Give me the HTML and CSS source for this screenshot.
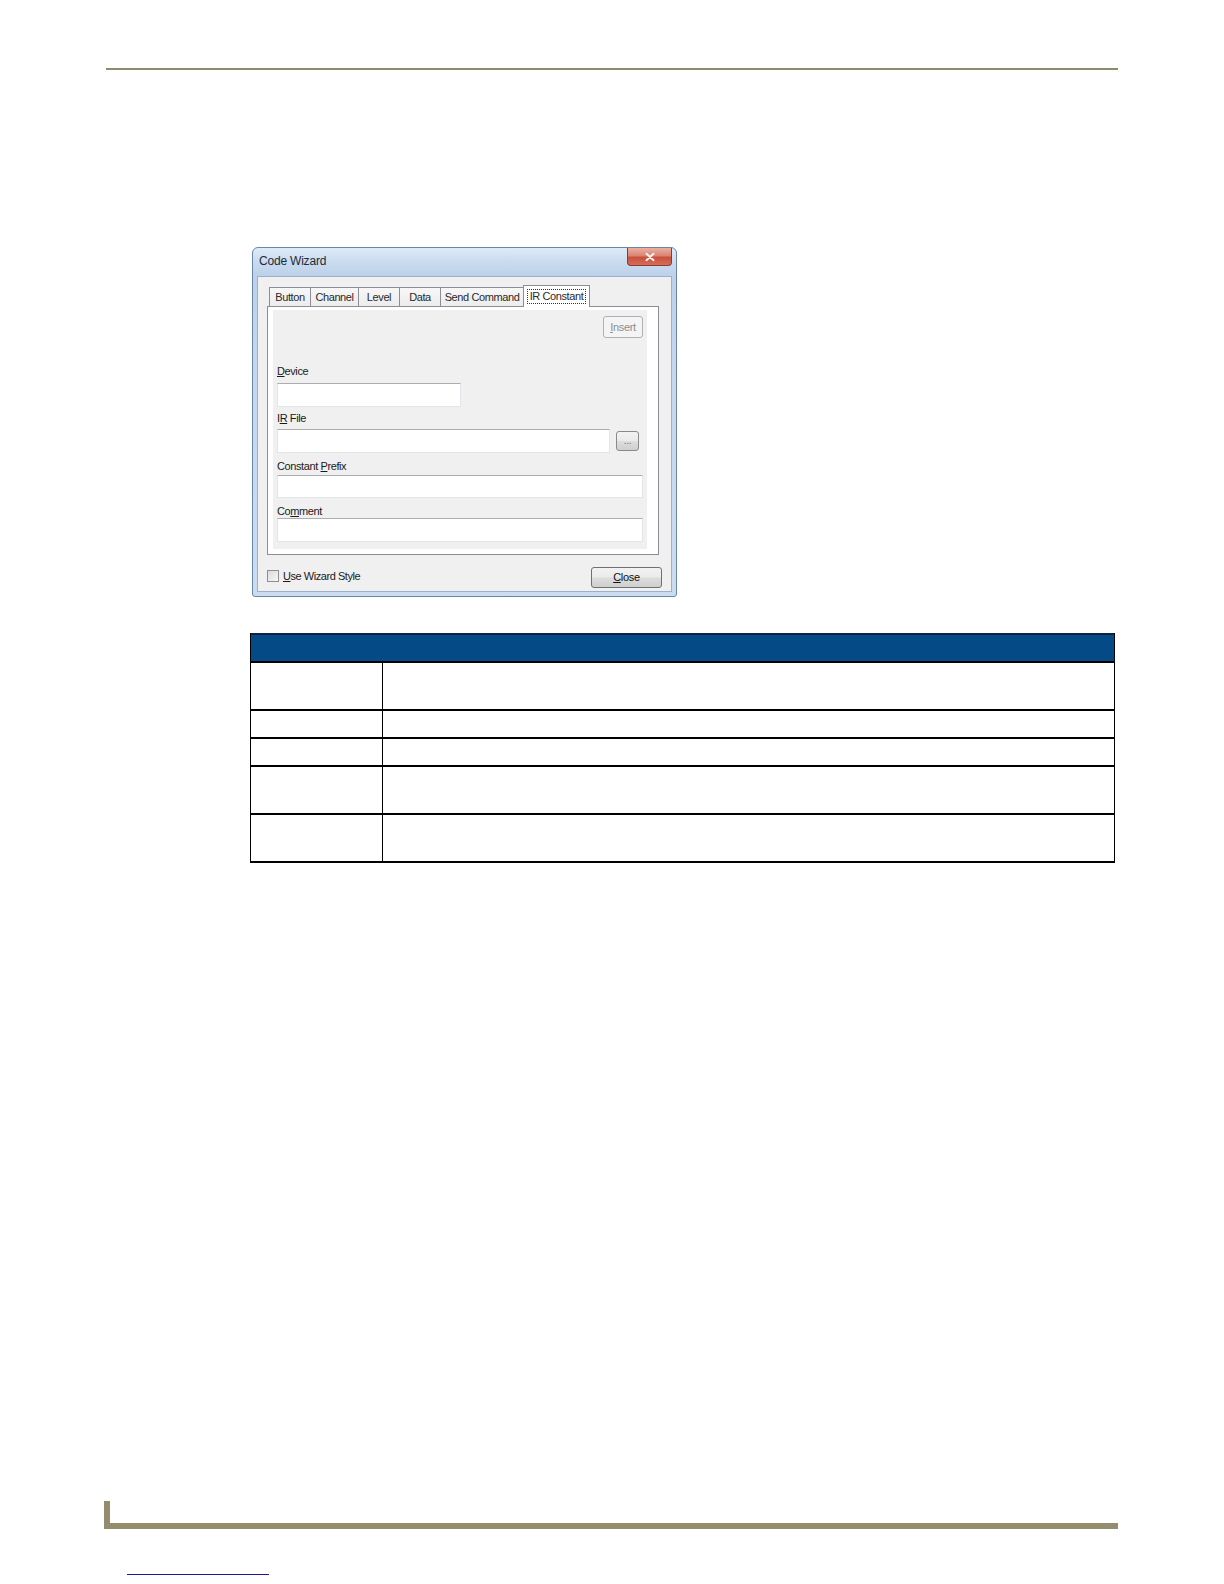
FILE: index.html
```html
<!DOCTYPE html>
<html lang="en">
<head>
<meta charset="utf-8">
<title>Code Wizard - IR Constant</title>
<link rel="stylesheet" href="styles.css">
</head>
<body>
<div class="page">
  <div class="top-rule"></div>

  <div class="dialog">
    <div class="titlebar">
      <span class="title">Code Wizard</span>
      <div class="close-x">
        <svg width="12" height="10" viewBox="0 0 12 10"><path d="M2.5 1.8 L9.5 8.2 M9.5 1.8 L2.5 8.2" stroke="#fbf4f2" stroke-width="2" stroke-linecap="round"/></svg>
      </div>
    </div>
    <div class="client">
      <div class="tabs">
        <div class="tab w-button">Button</div>
        <div class="tab w-channel">Channel</div>
        <div class="tab w-level">Level</div>
        <div class="tab w-data">Data</div>
        <div class="tab w-send">Send Command</div>
        <div class="tab tab-active w-ir"><span class="focus">IR Constant</span></div>
      </div>
      <div class="panel">
        <div class="page-area">
          <div class="insert-row">
            <div class="btn btn-disabled btn-insert"><u>I</u>nsert</div>
          </div>
          <div class="label lbl-device"><u>D</u>evice</div>
          <div class="field fld-device"></div>
          <div class="label lbl-ir">I<u>R</u> File</div>
          <div class="ir-row">
            <div class="field fld-ir"></div>
            <div class="btn btn-browse">...</div>
          </div>
          <div class="label lbl-prefix">Constant <u>P</u>refix</div>
          <div class="field fld-prefix"></div>
          <div class="label lbl-comment">Co<u>m</u>ment</div>
          <div class="field fld-comment"></div>
        </div>
      </div>
      <div class="dlg-footer">
        <div class="check-wrap">
          <div class="checkbox"></div>
          <span class="check-label"><u>U</u>se Wizard Style</span>
        </div>
        <div class="btn btn-close"><u>C</u>lose</div>
      </div>
    </div>
  </div>

  <div class="ptable">
    <div class="ptable-head"></div>
    <div class="prow h48"><div class="pcell-name"></div><div class="pcell-desc"></div></div>
    <div class="prow h28"><div class="pcell-name"></div><div class="pcell-desc"></div></div>
    <div class="prow h28"><div class="pcell-name"></div><div class="pcell-desc"></div></div>
    <div class="prow h48"><div class="pcell-name"></div><div class="pcell-desc"></div></div>
    <div class="prow h48 last"><div class="pcell-name"></div><div class="pcell-desc"></div></div>
  </div>

  <div class="foot-rule"></div>
  <div class="foot-link"></div>
</div>
</body>
</html>
```

FILE: styles.css
```css
* { box-sizing: border-box; }

html, body {
  margin: 0;
  padding: 0;
  background: #ffffff;
}

.page {
  width: 1224px;
  height: 1584px;
  overflow: hidden;
  font-family: "Liberation Sans", Arial, sans-serif;
}

.top-rule {
  margin: 68px 0 0 106px;
  width: 1012px;
  height: 2px;
  background: #8e8a6f;
}

/* ---------- dialog ---------- */
.dialog {
  margin: 177px 0 0 252px;
  width: 425px;
  height: 350px;
  border: 1px solid #6a86a6;
  border-radius: 6px 6px 3px 3px;
  background: linear-gradient(180deg, #dfeaf7 0px, #c9dbef 14px, #bcd1ea 28px, #c4d7ed 120px, #cbdcef 350px);
  padding: 0 4px 4px 4px;
  display: flex;
  flex-direction: column;
  font-size: 11px;
  color: #1a1a1a;
}

.titlebar {
  height: 28px;
  display: flex;
  align-items: flex-start;
  justify-content: space-between;
}

.title {
  margin: 6px 0 0 2px;
  font-size: 12px;
  color: #1d2a3a;
  letter-spacing: -0.2px;
}

.close-x {
  width: 45px;
  height: 18px;
  border: 1px solid #8a3a30;
  border-top: none;
  border-radius: 0 0 4px 4px;
  background: linear-gradient(180deg, #eab0a4 0%, #dc8472 45%, #c9503d 55%, #d46d58 100%);
  display: flex;
  align-items: center;
  justify-content: center;
}

.close-x svg { display: block; }

.client {
  flex: 1;
  border: 1px solid #9bb0ca;
  background: #f0f0f0;
  padding: 8px 12px 0 9px;
  display: flex;
  flex-direction: column;
}

/* tabs */
.tabs {
  display: flex;
  align-items: flex-end;
  height: 21px;
  padding-left: 2px;
  position: relative;
  z-index: 2;
}

.tab {
  height: 19px;
  border: 1px solid #8b8e96;
  border-bottom: none;
  border-right: none;
  background: linear-gradient(180deg, #f7f7f7 0%, #ececec 100%);
  font-size: 11px;
  line-height: 18px;
  text-align: center;
  color: #2a2a2a;
  letter-spacing: -0.4px;
  white-space: nowrap;
}

.w-button { width: 41px; }
.w-channel { width: 48px; }
.w-level { width: 41px; }
.w-data { width: 41px; }
.w-send { width: 83px; }

.tab-active {
  width: 67px;
  height: 22px;
  margin-bottom: -1px;
  border-right: 1px solid #8b8e96;
  background: #ffffff;
  line-height: 18px;
  padding-top: 1px;
}

.focus {
  display: inline-block;
  border: 1px dotted #333;
  line-height: 13px;
  padding: 0 2px;
}

.panel {
  width: 392px;
  height: 249px;
  border: 1px solid #8b8e96;
  background: #ffffff;
  padding: 3px 11px 5px 5px;
  position: relative;
  z-index: 1;
}

.page-area {
  height: 100%;
  background: #f0f0f0;
  padding: 0 4px 0 4px;
  display: flex;
  flex-direction: column;
}

.insert-row {
  display: flex;
  justify-content: flex-end;
  margin-top: 6px;
}

.btn {
  border: 1px solid #707070;
  border-radius: 3px;
  background: linear-gradient(180deg, #f2f2f2 0%, #ebebeb 48%, #dddddd 52%, #cfcfcf 100%);
  font-size: 11px;
  text-align: center;
  color: #111;
  letter-spacing: -0.3px;
}

.btn-disabled {
  border-color: #adb2b5;
  background: #f4f4f4;
  color: #8d8d8d;
}

.btn-insert {
  width: 40px;
  height: 22px;
  line-height: 20px;
}

.label {
  height: 14px;
  line-height: 14px;
  font-size: 11px;
  color: #1a1a1a;
  letter-spacing: -0.4px;
}

.lbl-device { margin-top: 26px; }
.lbl-ir { margin-top: 4px; }
.lbl-prefix { margin-top: 6px; }
.lbl-comment { margin-top: 6px; }

.field {
  background: #ffffff;
  border: 1px solid #e2e6ea;
  border-top-color: #abadb3;
}

.fld-device { width: 184px; height: 24px; margin-top: 5px; }

.ir-row {
  display: flex;
  align-items: center;
  margin-top: 4px;
}

.fld-ir { width: 333px; height: 24px; }

.btn-browse {
  width: 23px;
  height: 20px;
  margin-left: 6px;
  line-height: 17px;
  color: #777;
  font-size: 10px;
  border-color: #8a8a8a;
}

.fld-prefix { width: 366px; height: 23px; margin-top: 2px; }
.fld-comment { width: 366px; height: 24px; margin-top: 0; }

.dlg-footer {
  margin-top: 12px;
  margin-right: -3px;
  display: flex;
  align-items: center;
  justify-content: space-between;
}

.check-wrap {
  display: flex;
  align-items: center;
  margin-left: 0;
  margin-top: -3px;
}

.checkbox {
  width: 12px;
  height: 12px;
  border: 1px solid #8e8f8f;
  background: linear-gradient(135deg, #dcdcdc 0%, #f6f6f6 100%);
}

.check-label {
  margin-left: 4px;
  font-size: 11px;
  letter-spacing: -0.45px;
  color: #1a1a1a;
}

.btn-close {
  width: 71px;
  height: 21px;
  line-height: 19px;
}

/* ---------- parameter table ---------- */
.ptable {
  margin: 36px 0 0 250px;
  width: 865px;
  border-left: 1px solid #000;
  border-right: 1px solid #000;
}

.ptable-head {
  height: 30px;
  background: #034a87;
  border-top: 2px solid #0c2440;
  border-bottom: 2px solid #000;
}

.prow {
  display: grid;
  grid-template-columns: 132px 1fr;
  border-bottom: 2px solid #000;
}

.prow.h48 { height: 48px; }
.prow.h28 { height: 28px; }

.pcell-name { border-right: 1px solid #000; }

/* ---------- footer ---------- */
.foot-rule {
  margin: 638px 0 0 104px;
  width: 1014px;
  height: 28px;
  border-left: 6px solid #938d6d;
  border-bottom: 6px solid #938d6d;
}

.foot-link {
  margin: 45px 0 0 127px;
  width: 142px;
  height: 1px;
  background: #1b1b8f;
}
```
